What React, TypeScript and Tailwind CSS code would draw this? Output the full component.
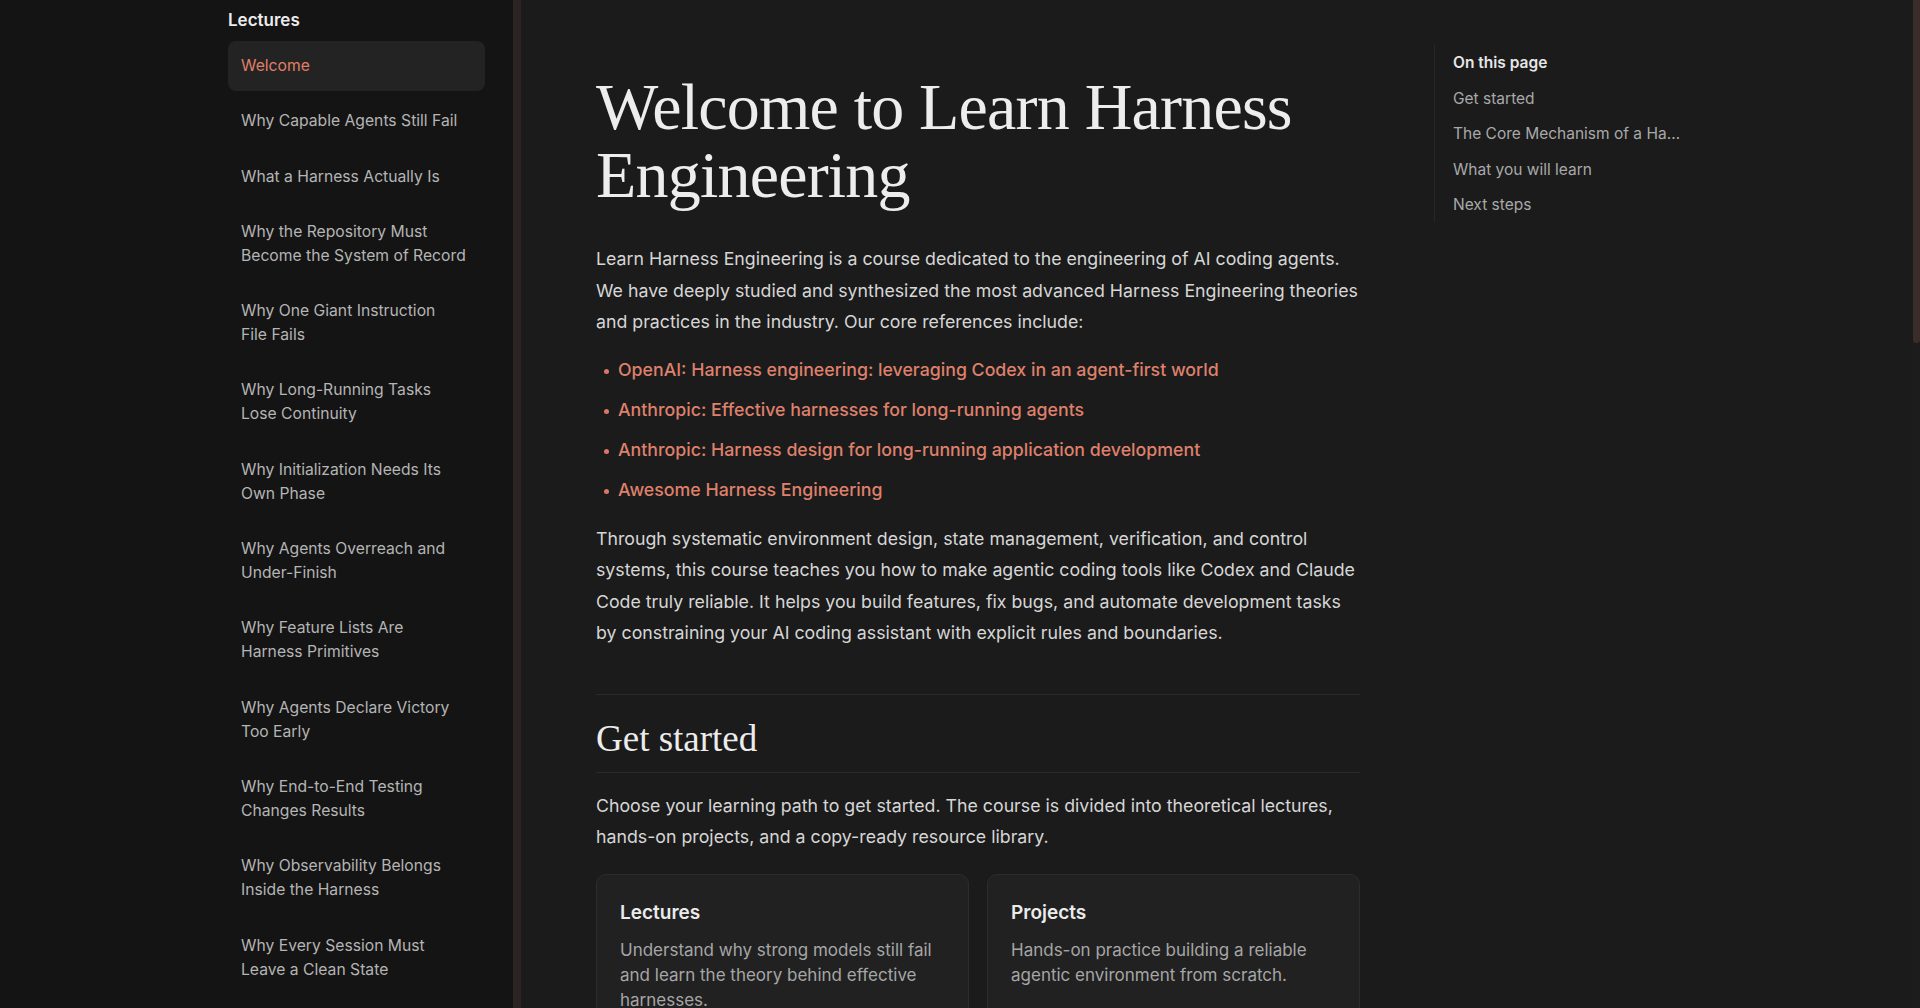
import React from "react";

// Each lecture title is stored as the lines it is set in within the narrow nav column.
const lectures: string[][] = [
  ["Welcome"],
  ["Why Capable Agents Still Fail"],
  ["What a Harness Actually Is"],
  ["Why the Repository Must", "Become the System of Record"],
  ["Why One Giant Instruction", "File Fails"],
  ["Why Long-Running Tasks", "Lose Continuity"],
  ["Why Initialization Needs Its", "Own Phase"],
  ["Why Agents Overreach and", "Under-Finish"],
  ["Why Feature Lists Are", "Harness Primitives"],
  ["Why Agents Declare Victory", "Too Early"],
  ["Why End-to-End Testing", "Changes Results"],
  ["Why Observability Belongs", "Inside the Harness"],
  ["Why Every Session Must", "Leave a Clean State"],
];

const references: string[] = [
  "OpenAI: Harness engineering: leveraging Codex in an agent-first world",
  "Anthropic: Effective harnesses for long-running agents",
  "Anthropic: Harness design for long-running application development",
  "Awesome Harness Engineering",
];

const toc: string[] = [
  "Get started",
  "The Core Mechanism of a Harness",
  "What you will learn",
  "Next steps",
];

const sans = "font-['Inter','Noto_Sans',sans-serif]";
const serif = "font-['Liberation_Serif','Times_New_Roman',serif]";

function Sidebar() {
  return (
    <aside className="h-full w-[513px] shrink-0 overflow-hidden bg-[#141414] pl-[228px] pt-[8px]">
      <h2 className="text-[17px] font-semibold leading-[24px] text-[#ececec]">Lectures</h2>
      <nav className="mt-[9px] flex w-[257px] flex-col gap-[5.3px]">
        {lectures.map((lines, i) => (
          <a
            key={lines.join(" ")}
            href="#"
            className={
              i === 0
                ? "whitespace-nowrap rounded-[8px] bg-[#232323] px-[13px] py-[13px] text-[15.7px] leading-[24px] text-[#e07f68]"
                : "whitespace-nowrap rounded-[8px] px-[13px] py-[13px] text-[15.7px] leading-[24px] text-[#b5b5b5]"
            }
          >
            {lines.map((l) => (
              <span key={l} className="block">
                {l}
              </span>
            ))}
          </a>
        ))}
      </nav>
    </aside>
  );
}

function Card({ title, body }: { title: string; body: string }) {
  return (
    <div className="h-[200px] rounded-[10px] border border-[#2c2c2c] bg-[#212121] px-[23px] pt-[24px]">
      <h3 className="text-[19px] font-semibold leading-[28px] text-[#ebebeb]">{title}</h3>
      <p className="mt-[11px] text-[17px] leading-[25.3px] text-[#a6a6a6]">{body}</p>
    </div>
  );
}

function Article() {
  return (
    <article className="w-[764px] shrink-0 pt-[73px]">
      <h1 className={`${serif} text-[66px] font-normal leading-[68px] tracking-[-0.8px] text-[#ededed]`}>
        Welcome to Learn Harness Engineering
      </h1>
      <p className="mt-[34px] text-[17.75px] leading-[31.5px] text-[#d6d6d6]">
        Learn Harness Engineering is a course dedicated to the engineering of AI coding agents. We
        have deeply studied and synthesized the most advanced Harness Engineering theories and
        practices in the industry. Our core references include:
      </p>
      <ul className="mt-[16px] flex flex-col gap-[8.5px]">
        {references.map((r) => (
          <li key={r} className="relative pl-[22px] text-[17.75px] leading-[31.5px]">
            <span className="absolute left-[8px] top-[15px] h-[5px] w-[5px] rounded-full bg-[#d9776a]" />
            <a href="#" className="font-medium text-[#df806b]">
              {r}
            </a>
          </li>
        ))}
      </ul>
      <p className="mt-[18px] text-[17.75px] leading-[31.3px] text-[#d6d6d6]">
        Through systematic environment design, state management, verification, and control
        systems, this course teaches you how to make agentic coding tools like Codex and Claude
        Code truly reliable. It helps you build features, fix bugs, and automate development tasks
        by constraining your AI coding assistant with explicit rules and boundaries.
      </p>
      <div className="mt-[45.5px] border-t border-[#2a2a2a]" />
      <h2
        className={`${serif} mt-[22px] border-b border-[#2a2a2a] pb-[11px] text-[37px] font-normal leading-[44px] text-[#ececec]`}
      >
        Get started
      </h2>
      <p className="mt-[17px] text-[17.75px] leading-[31.5px] text-[#d6d6d6]">
        Choose your learning path to get started. The course is divided into theoretical lectures,
        hands-on projects, and a copy-ready resource library.
      </p>
      <div className="mt-[21px] grid grid-cols-2 gap-[18px]">
        <Card
          title="Lectures"
          body="Understand why strong models still fail and learn the theory behind effective harnesses."
        />
        <Card
          title="Projects"
          body="Hands-on practice building a reliable agentic environment from scratch."
        />
      </div>
    </article>
  );
}

function OnThisPage() {
  return (
    <nav className="ml-[74px] mt-[44px] h-[178px] w-[250px] border-l border-[#262626] pl-[18px] pt-[8px]">
      <div className="text-[15.5px] font-semibold leading-[22px] text-[#e6e6e6]">On this page</div>
      <ul className="mt-[13.5px] flex flex-col gap-[13.5px]">
        {toc.map((t) => (
          <li key={t} className="w-[228px] truncate text-[15.5px] leading-[22px] text-[#a9a9a9]">
            {t}
          </li>
        ))}
      </ul>
    </nav>
  );
}

export default function App() {
  return (
    <div className={`${sans} flex h-[1008px] w-[1920px] overflow-hidden bg-[#1b1b1b] antialiased`}>
      <Sidebar />
      <div className="h-full w-[8px] shrink-0 bg-[#2c2324]" />
      <main className="flex h-full flex-1 overflow-hidden pl-[75px]">
        <Article />
        <OnThisPage />
      </main>
      <div className="h-full w-[7px] shrink-0 bg-[#1c1c1c]">
        <div className="h-[343px] w-full rounded-b-[3px] bg-[#3a2c2a]" />
      </div>
    </div>
  );
}
